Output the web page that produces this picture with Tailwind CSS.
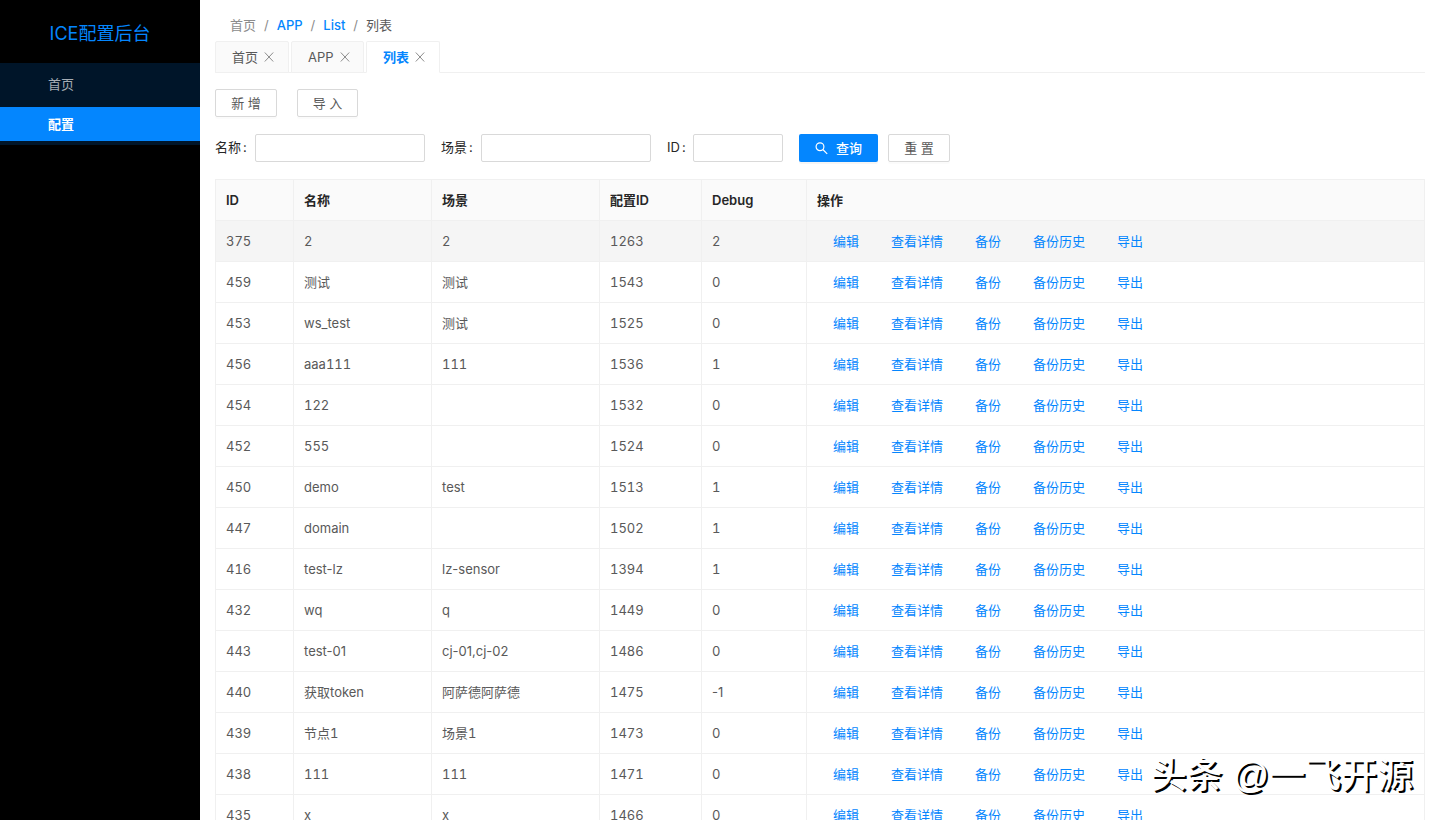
<!DOCTYPE html>
<html lang="zh-CN">
<head>
<meta charset="utf-8">
<meta name="viewport" content="width=device-width, initial-scale=1">
<title>ICE配置后台</title>
<script src="https://cdn.jsdelivr.net/npm/@tailwindcss/browser@4"></script>
</head>
<body class="flex h-screen overflow-hidden bg-white font-['Inter','Noto_Sans_CJK_SC',sans-serif] text-[13px] leading-5 text-[#595959]">
  <aside class="w-[200px] shrink-0 bg-black">
    <h1 class="flex h-[63px] items-center justify-center pt-1 text-lg text-[#0486fe]">ICE配置后台</h1>
    <nav class="bg-[#001529] pb-1">
      <a href="#" class="flex h-11 items-center pb-0.5 pl-12 text-[#a6adb4]">首页</a>
      <a href="#" class="flex h-[34px] items-center bg-[#0486fe] pl-12 font-bold text-white">配置</a>
    </nav>
  </aside>

  <main class="min-w-0 grow pt-[15px] pr-3.5 pl-[15px]">
    <nav class="flex h-[26px] gap-2 pl-[15px] text-[#8c8c8c]" aria-label="breadcrumb">
      <a href="#">首页</a><span>/</span>
      <a href="#" class="font-medium text-[#0486fe]">APP</a><span>/</span>
      <a href="#" class="font-medium text-[#0486fe]">List</a><span>/</span>
      <span class="text-[#595959]">列表</span>
    </nav>

    <div class="flex h-8 gap-0.5 border-b border-[#f0f0f0]">
      <div class="flex h-8 w-[74px] items-center gap-1.5 rounded-t-xs border border-[#f0f0f0] bg-[#fafafa] pl-4">
        <a href="#">首页</a>
        <button aria-label="关闭首页"><svg class="size-2.5" viewBox="0 0 10 10" fill="none" stroke="#8c8c8c"><path d="M.8.5 9.2 9.5M9.2.5.8 9.5"/></svg></button>
      </div>
      <div class="flex h-8 w-[73px] items-center gap-1.5 rounded-t-xs border border-[#f0f0f0] bg-[#fafafa] pl-4">
        <a href="#">APP</a>
        <button aria-label="关闭APP"><svg class="size-2.5" viewBox="0 0 10 10" fill="none" stroke="#8c8c8c"><path d="M.8.5 9.2 9.5M9.2.5.8 9.5"/></svg></button>
      </div>
      <div class="flex h-8 w-[74px] items-center gap-1.5 rounded-t-xs border border-[#f0f0f0] border-b-white bg-white pl-4">
        <a href="#" class="font-bold text-[#0486fe]">列表</a>
        <button aria-label="关闭列表"><svg class="size-2.5" viewBox="0 0 10 10" fill="none" stroke="#8c8c8c"><path d="M.8.5 9.2 9.5M9.2.5.8 9.5"/></svg></button>
      </div>
    </div>

    <div class="mt-4 flex gap-5">
      <button class="h-7 w-[62px] rounded-xs border border-[#d9d9d9] shadow-[0_2px_0_rgba(0,0,0,0.016)]">新 增</button>
      <button class="h-7 w-[61px] rounded-xs border border-[#d9d9d9] shadow-[0_2px_0_rgba(0,0,0,0.016)]">导 入</button>
    </div>

    <form class="mt-[17px] flex items-center text-[#262626]">
      <label for="name" class="flex w-10 gap-0.5 pb-0.5">名称<span>:</span></label>
      <input id="name" class="h-7 w-[170px] rounded-xs border border-[#d9d9d9] px-2">
      <label for="scene" class="ml-4 flex w-10 gap-0.5 pb-0.5">场景<span>:</span></label>
      <input id="scene" class="h-7 w-[170px] rounded-xs border border-[#d9d9d9] px-2">
      <label for="id" class="ml-4 flex w-[26px] gap-0.5 pb-0.5">ID<span>:</span></label>
      <input id="id" class="h-7 w-[90px] rounded-xs border border-[#d9d9d9] px-2">
      <button type="button" class="ml-4 flex h-7 w-[79px] items-center justify-center gap-2 rounded-xs bg-[#0486fe] font-medium text-white shadow-[0_2px_0_rgba(0,0,0,0.04)]">
        <svg class="size-[13px]" viewBox="0 0 13 13" fill="none" stroke="currentColor" stroke-width="1.2"><circle cx="5" cy="4.7" r="3.9"/><path d="m7.8 7.5 4.4 4.4"/></svg>
        查询
      </button>
      <button type="reset" class="ml-2.5 h-7 w-[62px] rounded-xs border border-[#d9d9d9] text-[#595959] shadow-[0_2px_0_rgba(0,0,0,0.016)]">重 置</button>
    </form>

    <table class="mt-[17px] w-full table-fixed border-collapse text-left">
      <colgroup>
        <col class="w-[78px]"><col class="w-[138px]"><col class="w-[168px]"><col class="w-[102px]"><col class="w-[105px]"><col>
      </colgroup>
      <thead>
        <tr class="h-[41px] bg-[#fafafa] text-[#262626]">
          <th class="border border-[#f0f0f0] px-2.5 font-semibold">ID</th>
          <th class="border border-[#f0f0f0] px-2.5 font-semibold">名称</th>
          <th class="border border-[#f0f0f0] px-2.5 font-semibold">场景</th>
          <th class="border border-[#f0f0f0] px-2.5 font-semibold">配置ID</th>
          <th class="border border-[#f0f0f0] px-2.5 font-semibold">Debug</th>
          <th class="border border-[#f0f0f0] px-2.5 font-semibold">操作</th>
        </tr>
      </thead>
      <tbody id="rows"></tbody>
    </table>
  </main>

  <p class="absolute right-[26px] bottom-5 font-['Liberation_Sans','Noto_Sans_CJK_SC',sans-serif] text-[36px] leading-[48px] font-medium whitespace-nowrap text-white [text-shadow:2px_2px_0_#000]">头条 @一飞开源</p>

  <script>
    const data = [
      [375, '2', '2', 1263, 2],
      [459, '测试', '测试', 1543, 0],
      [453, 'ws_test', '测试', 1525, 0],
      [456, 'aaa111', '111', 1536, 1],
      [454, '122', '', 1532, 0],
      [452, '555', '', 1524, 0],
      [450, 'demo', 'test', 1513, 1],
      [447, 'domain', '', 1502, 1],
      [416, 'test-lz', 'lz-sensor', 1394, 1],
      [432, 'wq', 'q', 1449, 0],
      [443, 'test-01', 'cj-01,cj-02', 1486, 0],
      [440, '获取token', '阿萨德阿萨德', 1475, -1],
      [439, '节点1', '场景1', 1473, 0],
      [438, '111', '111', 1471, 0],
      [435, 'x', 'x', 1466, 0],
    ];
    const actions = ['编辑', '查看详情', '备份', '备份历史', '导出'];
    const links = actions.map(a => `<a href="#">${a}</a>`).join('');
    // Tabular figures also widen the hyphen, so hyphenated values keep proportional ones.
    const figures = v => String(v).includes('-') ? 'proportional-nums' : 'tabular-nums';
    document.getElementById('rows').innerHTML = data.map(row => `
      <tr class="h-[41px] first:bg-[#f5f5f5]">
        ${row.map(v => `<td class="border border-[#f0f0f0] px-2.5 ${figures(v)}">${v}</td>`).join('')}
        <td class="border border-[#f0f0f0] px-2.5"><div class="flex gap-8 pl-4 text-[#0486fe]">${links}</div></td>
      </tr>`).join('');
  </script>
</body>
</html>
